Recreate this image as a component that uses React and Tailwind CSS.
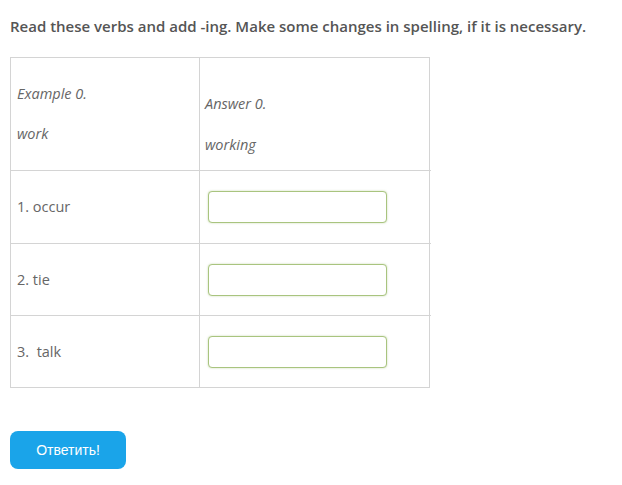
import React from 'react'

const rows = [
  { label: '1. occur', h: 'h-[73px]' },
  { label: '2. tie', h: 'h-[72px]' },
  { label: '3.\u00a0 talk', h: 'h-[72px]' }
]

const App = () => {
  return (
    <div className="min-h-[485px] w-[622px] bg-white px-[10px] pt-[15px] font-['Open_Sans',sans-serif] text-[#555]">
      <h1 className="text-[15px] font-semibold leading-[22px] text-[#555]">
        Read these verbs and add -ing. Make some changes in spelling, if it is necessary.
      </h1>
      <div className="mt-[20px] grid w-[420px] grid-cols-[189px_231px] border border-[#d4d4d4] text-[14.5px] text-[#666]">
        <div className="h-[112px] border-r border-[#d4d4d4] pl-[6px] pt-[26px] italic">
          <p className="leading-[20px]">Example 0.</p>
          <p className="mt-[20px] leading-[20px]">work</p>
        </div>
        <div className="h-[112px] pl-[5px] pt-[36px] italic">
          <p className="leading-[20px]">Answer 0.</p>
          <p className="mt-[21px] leading-[20px]">working</p>
        </div>
        {rows.map((row) => (
          <React.Fragment key={row.label}>
            <div className={`flex items-center border-r border-t border-[#d4d4d4] pl-[6px] ${row.h}`}>
              {row.label}
            </div>
            <div className={`flex items-center border-t border-[#d4d4d4] pl-[8px] ${row.h}`}>
              <input
                type="text"
                className="h-[32px] w-[179px] rounded-[4px] border border-[#a9c47f] bg-white shadow-[0_0_2px_rgba(140,180,90,0.5)] outline-none"
              />
            </div>
          </React.Fragment>
        ))}
      </div>
      <button className="mt-[43px] flex h-[38px] w-[116px] items-center justify-center rounded-[8px] bg-[#1aa4e9] font-['Liberation_Sans',sans-serif] text-[14px] text-white">
        Ответить!
      </button>
    </div>
  )
}

export default App
